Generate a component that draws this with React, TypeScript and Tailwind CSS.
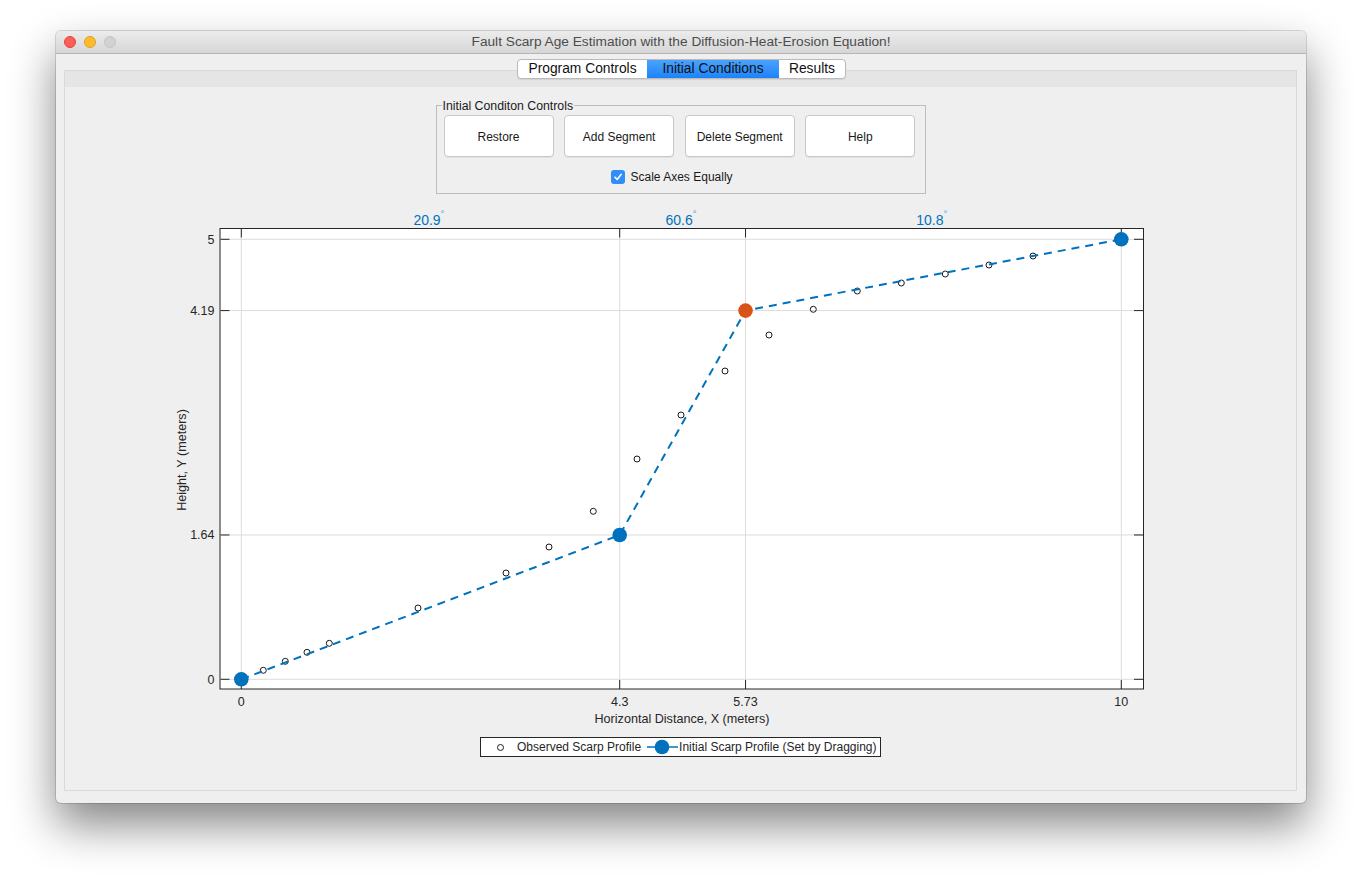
import React from "react";

const FONT = { fontFamily: '"Liberation Sans", Arial, Helvetica, sans-serif' };

const X = (v: number) => 241.3 + v * 88;
const Y = (v: number) => 679.3 - v * 88;

const observed: [number, number][] = [
  [263.3, 670.3],
  [285.3, 661.3],
  [307, 652.3],
  [329.3, 643.3],
  [418, 608],
  [506, 573],
  [549, 547],
  [593.3, 511.3],
  [637, 459],
  [681, 415],
  [725, 371],
  [769, 335],
  [813.3, 309.3],
  [857.3, 291],
  [901.3, 283],
  [945.3, 274],
  [989, 265],
  [1033, 256],
];

const ctrl: [number, number][] = [
  [0, 0],
  [4.3, 1.64],
  [5.73, 4.19],
  [10, 5],
];

function Chart() {
  const xt = [0, 4.3, 5.73, 10];
  const yt = [0, 1.64, 4.19, 5];
  const xl = ["0", "4.3", "5.73", "10"];
  const yl = ["0", "1.64", "4.19", "5"];
  const pts = ctrl.map(([a, b]) => `${X(a)},${Y(b)}`).join(" ");
  const angles = [
    { x: (X(0) + X(4.3)) / 2, t: "20.9" },
    { x: (X(4.3) + X(5.73)) / 2, t: "60.6" },
    { x: (X(5.73) + X(10)) / 2, t: "10.8" },
  ];
  return (
    <svg
      className="block"
      width={1231}
      height={543}
      viewBox="65 194 1231 543"
      style={FONT}
    >
      <rect x={220.5} y={228.5} width={923} height={460.5} fill="#ffffff" />
      {xt.map((v, i) => (
        <line key={"gx" + i} x1={X(v)} x2={X(v)} y1={229} y2={689} stroke="#dcdcdc" strokeWidth={1} />
      ))}
      {yt.map((v, i) => (
        <line key={"gy" + i} x1={221} x2={1143} y1={Y(v)} y2={Y(v)} stroke="#dcdcdc" strokeWidth={1} />
      ))}
      {xt.map((v, i) => (
        <g key={"tx" + i}>
          <line x1={X(v)} x2={X(v)} y1={228.5} y2={237.5} stroke="#262626" strokeWidth={1} />
          <line x1={X(v)} x2={X(v)} y1={680} y2={689} stroke="#262626" strokeWidth={1} />
        </g>
      ))}
      {yt.map((v, i) => (
        <g key={"ty" + i}>
          <line x1={220.5} x2={229.5} y1={Y(v)} y2={Y(v)} stroke="#262626" strokeWidth={1} />
          <line x1={1134} x2={1143.5} y1={Y(v)} y2={Y(v)} stroke="#262626" strokeWidth={1} />
        </g>
      ))}
      <rect x={220} y={228.5} width={923.5} height={460.5} fill="none" stroke="#262626" strokeWidth={1} />

      {yt.map((v, i) => (
        <text key={"yl" + i} x={214.5} y={Y(v) + 4.4} textAnchor="end" fontSize={12.5} fill="#262626">
          {yl[i]}
        </text>
      ))}
      {xt.map((v, i) => (
        <text key={"xl" + i} x={X(v)} y={706.4} textAnchor="middle" fontSize={12.5} fill="#262626">
          {xl[i]}
        </text>
      ))}
      <text x={682} y={723.2} textAnchor="middle" fontSize={12.6} fill="#262626">
        Horizontal Distance, X (meters)
      </text>
      <text
        x={0}
        y={0}
        transform="translate(185.5 460) rotate(-90)"
        textAnchor="middle"
        fontSize={12.6}
        fill="#262626"
      >
        Height, Y (meters)
      </text>

      {angles.map((a, i) => (
        <g key={"an" + i}>
          <text x={a.x - 3.5} y={225} textAnchor="middle" fontSize={14} fill="#0072bd">
            {a.t}
          </text>
          <text x={a.x + 12} y={217} textAnchor="middle" fontSize={9.5} fill="#4a9bd6">
            °
          </text>
        </g>
      ))}

      {observed.map(([cx, cy], i) => (
        <circle key={"o" + i} cx={cx} cy={cy} r={3} fill="none" stroke="#1a1a1a" strokeWidth={1} />
      ))}
      <polyline points={pts} fill="none" stroke="#0072bd" strokeWidth={2} strokeDasharray="8 6" strokeDashoffset={-14} />
      {ctrl.map(([a, b], i) => (
        <circle key={"c" + i} cx={X(a)} cy={Y(b)} r={7.3} fill={i === 2 ? "#d95319" : "#0072bd"} />
      ))}
    </svg>
  );
}

function Legend() {
  return (
    <div
      className="mx-auto flex h-[20px] w-[401px] items-center border border-[#262626] bg-white text-[12px] text-[#262626]"
      style={FONT}
    >
      <svg className="ml-[15px] block" width={9} height={9} viewBox="0 0 9 9">
        <circle cx={4.5} cy={4.5} r={3} fill="none" stroke="#1a1a1a" strokeWidth={1} />
      </svg>
      <span className="ml-[12px] whitespace-nowrap">Observed Scarp Profile</span>
      <svg className="ml-[6px] block" width={31} height={16} viewBox="0 0 31 16">
        <line x1={0} x2={31} y1={8} y2={8} stroke="#0072bd" strokeWidth={1.5} />
        <circle cx={15} cy={8} r={7.3} fill="#0072bd" />
      </svg>
      <span className="ml-[1px] whitespace-nowrap">Initial Scarp Profile (Set by Dragging)</span>
    </div>
  );
}

function Button({ label }: { label: string }) {
  return (
    <button
      className="flex h-[42px] w-[110px] items-center justify-center rounded-[4px] border border-[#c8c8c8] bg-white pt-[1px] text-[12px] text-[#1a1a1a] shadow-[0_1px_0_rgba(0,0,0,0.05)]"
      style={FONT}
    >
      {label}
    </button>
  );
}

export default function App() {
  return (
    <div className="h-[884px] w-[1362px] overflow-hidden bg-white pl-[56px] pt-[31px]" style={FONT}>
      <div className="flex h-[772px] w-[1250px] flex-col overflow-hidden rounded-[5px] bg-[#efefef] shadow-[0_22px_45px_rgba(0,0,0,0.48),0_0_0_1px_rgba(0,0,0,0.14)]">
        {/* Title bar */}
        <div className="relative flex h-[23px] shrink-0 items-center border-b border-[#b6b6b6] bg-linear-to-b from-[#ececec] to-[#d6d6d6] pl-[8px]">
          <div className="flex items-center gap-[8px]">
            <div className="h-[12px] w-[12px] rounded-full border border-[#e0443e] bg-[#fc5f57]" />
            <div className="h-[12px] w-[12px] rounded-full border border-[#dea123] bg-[#fdbc2e]" />
            <div className="h-[12px] w-[12px] rounded-full border border-[#c4c4c4] bg-[#d2d2d2]" />
          </div>
          <div className="absolute inset-0 flex items-center justify-center text-[13.7px] text-[#4d4d4d]">
            Fault Scarp Age Estimation with the Diffusion-Heat-Erosion Equation!
          </div>
        </div>

        {/* Body */}
        <div className="relative flex-1">
          <div className="ml-[8px] mt-[16px] h-[721px] w-[1233px] border border-[#d9d9d9] bg-[#efefef]">
            <div className="h-[16px] bg-[#e5e5e5]" />
            {/* Group box */}
            <div className="relative mx-auto mt-[18px] h-[89px] w-[490px] border border-[#bdbdbd] pl-[7px] pt-[9px]">
              <span className="absolute left-[5px] top-[-7px] bg-[#efefef] px-[1px] text-[12.3px] leading-[14px] text-[#1a1a1a]">
                Initial Conditon Controls
              </span>
              <div className="flex gap-[10.6px]">
                <Button label="Restore" />
                <Button label="Add Segment" />
                <Button label="Delete Segment" />
                <Button label="Help" />
              </div>
              <div className="ml-[167px] mt-[13px] flex items-center gap-[6px]">
                <div className="flex h-[14px] w-[14px] items-center justify-center rounded-[3px] bg-[#2f8ef8]">
                  <svg width={10} height={10} viewBox="0 0 10 10">
                    <path d="M2 5.2 L4.2 7.4 L8.2 2.3" fill="none" stroke="#ffffff" strokeWidth={1.6} strokeLinecap="round" strokeLinejoin="round" />
                  </svg>
                </div>
                <span className="text-[12px] leading-[14px] text-[#1a1a1a]">Scale Axes Equally</span>
              </div>
            </div>
            <Chart />
            <Legend />
          </div>

          {/* Tabs (overlay on panel top edge) */}
          <div className="absolute left-0 right-0 top-[5px] flex justify-center">
            <div className="ml-[1px] flex h-[20px] overflow-hidden rounded-[4px] border border-[#bababa] bg-white text-[13.8px] text-[#111111] shadow-[0_1px_1px_rgba(0,0,0,0.08)]">
              <div className="flex w-[129px] items-center justify-center">Program Controls</div>
              <div className="flex w-[132px] items-center justify-center bg-linear-to-b from-[#4aa2fc] to-[#1a83fb]">
                Initial Conditions
              </div>
              <div className="flex w-[66px] items-center justify-center">Results</div>
            </div>
          </div>
        </div>
      </div>
    </div>
  );
}
